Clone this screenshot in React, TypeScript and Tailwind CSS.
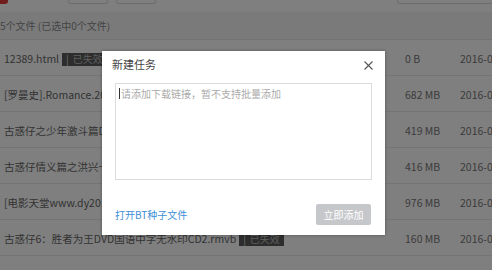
import React from 'react';

const rows = [
  { name: '12389.html', expired: true, size: '0 B', date: '2016-06-12' },
  { name: '[罗曼史].Romance.2008.DVD中字.rmvb', size: '682 MB', date: '2016-06-12' },
  { name: '古惑仔之少年激斗篇DVD国语中字.rmvb', size: '419 MB', date: '2016-06-12' },
  { name: '古惑仔情义篇之洪兴十三妹DVD.rmvb', size: '416 MB', date: '2016-06-12' },
  { name: '[电影天堂www.dy2018.com]古惑仔.rmvb', size: '976 MB', date: '2016-06-12' },
  { name: '古惑仔6：胜者为王DVD国语中字无水印CD2.rmvb', expired: true, size: '160 MB', date: '2016-05-30' },
];

const ExpiredTag = () => (
  <span className="ml-[3px] inline-flex items-center bg-[#5a5a5a] px-[4px] h-[13px] text-[10px] text-[#bdbdbd] leading-none">
    <span className="mr-[4px] text-[#dcdcdc]">|</span>已失效
  </span>
);

const App = () => {
  return (
    <div
      className="relative w-[492px] h-[270px] overflow-hidden bg-white text-[#666]"
      style={{ fontFamily: '"Noto Sans CJK SC", "Noto Sans", sans-serif' }}
    >
      {/* toolbar (bottom edge only) */}
      <div className="flex h-[12px] items-start gap-[8px]">
        <div className="h-[4px] w-[8px] rounded-br-[3px] bg-[#e23b3b]" />
        <div className="ml-[52px] h-[4px] w-[40px] rounded-b-[3px] border-x border-b border-[#d9d9d9]" />
        <div className="h-[4px] w-[40px] rounded-b-[3px] border-x border-b border-[#d9d9d9]" />
        <div className="ml-auto h-[4px] w-[95px] rounded-bl-[3px] border-l border-b border-[#d9d9d9]" />
      </div>

      {/* count strip */}
      <div className="flex h-[28px] items-center border-b border-[#e6e6e6] bg-[#f5f5f5] text-[10px] text-[#888]">
        5个文件 (已选中0个文件)
      </div>

      {/* file rows */}
      <div className="flex flex-col">
        {rows.map((r) => (
          <div key={r.name} className="flex h-[36px] items-center border-b border-[#e9e9e9] text-[10.5px]">
            <div className="flex w-[405px] shrink-0 items-center overflow-hidden whitespace-nowrap pl-[4px] pt-[3px]">
              <span>{r.name}</span>
              {r.expired && <ExpiredTag />}
            </div>
            <div className="w-[55px] shrink-0 pt-[3px] text-[#777]">{r.size}</div>
            <div className="shrink-0 pt-[3px] whitespace-nowrap text-[#777]">{r.date}</div>
          </div>
        ))}
      </div>

      {/* dim overlay */}
      <div className="absolute inset-0 bg-black/50" />

      {/* dialog */}
      <div className="absolute left-[102px] top-[51px] flex h-[184px] w-[283px] flex-col bg-white shadow-[0_0_3px_rgba(0,0,0,0.35)]">
        <div className="flex h-[25px] items-center justify-between pl-[10px] pr-[12px] pt-[1px]">
          <span className="text-[11px] text-[#444]">新建任务</span>
          <button className="mt-[3px] text-[#555]">
            <svg width="9" height="9" viewBox="0 0 9 9" stroke="currentColor" strokeWidth="1.1">
              <path d="M0.5 0.5 L8.5 8.5 M8.5 0.5 L0.5 8.5" />
            </svg>
          </button>
        </div>
        <div className="mx-[13px] mt-[7px] h-[97px] border border-[#dcdcdc] px-[3px] pt-[2px]">
          <div className="flex items-center text-[10px] text-[#aaa]">
            <span className="mr-[1px] h-[11px] w-[1px] bg-[#333]" />
            请添加下载链接，暂不支持批量添加
          </div>
        </div>
        <div className="mt-auto mb-[10px] flex items-center justify-between pl-[13px] pr-[14px]">
          <a className="text-[10px] text-[#3d8fd6]">打开BT种子文件</a>
          <button className="h-[21px] w-[55px] rounded-[2px] bg-[#c6c7cb] text-[10px] text-white">立即添加</button>
        </div>
      </div>
    </div>
  );
};

export default App;
